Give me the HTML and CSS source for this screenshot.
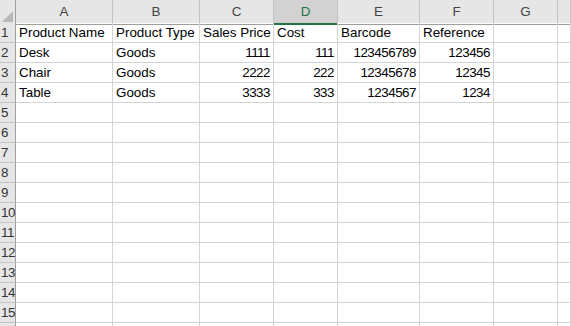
FILE: index.html
```html
<!DOCTYPE html>
<html lang="en">
<head>
  <meta charset="UTF-8" />
  <title>Products</title>
  <link rel="stylesheet" href="styles.css">
</head>
<body>
  <div class="sheet">
    <div class="row head">
      <div class="corner"></div>
      <div class="col">A</div>
      <div class="col">B</div>
      <div class="col">C</div>
      <div class="col active">D</div>
      <div class="col">E</div>
      <div class="col">F</div>
      <div class="col">G</div>
      <div class="col"></div>
    </div>

    <div class="row">
      <div class="num">1</div>
      <div class="cell">Product Name</div>
      <div class="cell">Product Type</div>
      <div class="cell">Sales Price</div>
      <div class="cell">Cost</div>
      <div class="cell">Barcode</div>
      <div class="cell">Reference</div>
      <div class="cell"></div>
      <div class="cell"></div>
    </div>
    <div class="row">
      <div class="num">2</div>
      <div class="cell">Desk</div>
      <div class="cell">Goods</div>
      <div class="cell val">1111</div>
      <div class="cell val">111</div>
      <div class="cell val">123456789</div>
      <div class="cell val">123456</div>
      <div class="cell"></div>
      <div class="cell"></div>
    </div>
    <div class="row">
      <div class="num">3</div>
      <div class="cell">Chair</div>
      <div class="cell">Goods</div>
      <div class="cell val">2222</div>
      <div class="cell val">222</div>
      <div class="cell val">12345678</div>
      <div class="cell val">12345</div>
      <div class="cell"></div>
      <div class="cell"></div>
    </div>
    <div class="row">
      <div class="num">4</div>
      <div class="cell">Table</div>
      <div class="cell">Goods</div>
      <div class="cell val">3333</div>
      <div class="cell val">333</div>
      <div class="cell val">1234567</div>
      <div class="cell val">1234</div>
      <div class="cell"></div>
      <div class="cell"></div>
    </div>

    <div class="row"><div class="num">5</div><div class="cell"></div><div class="cell"></div><div class="cell"></div><div class="cell"></div><div class="cell"></div><div class="cell"></div><div class="cell"></div><div class="cell"></div></div>
    <div class="row"><div class="num">6</div><div class="cell"></div><div class="cell"></div><div class="cell"></div><div class="cell"></div><div class="cell"></div><div class="cell"></div><div class="cell"></div><div class="cell"></div></div>
    <div class="row"><div class="num">7</div><div class="cell"></div><div class="cell"></div><div class="cell"></div><div class="cell"></div><div class="cell"></div><div class="cell"></div><div class="cell"></div><div class="cell"></div></div>
    <div class="row"><div class="num">8</div><div class="cell"></div><div class="cell"></div><div class="cell"></div><div class="cell"></div><div class="cell"></div><div class="cell"></div><div class="cell"></div><div class="cell"></div></div>
    <div class="row"><div class="num">9</div><div class="cell"></div><div class="cell"></div><div class="cell"></div><div class="cell"></div><div class="cell"></div><div class="cell"></div><div class="cell"></div><div class="cell"></div></div>
    <div class="row"><div class="num">10</div><div class="cell"></div><div class="cell"></div><div class="cell"></div><div class="cell"></div><div class="cell"></div><div class="cell"></div><div class="cell"></div><div class="cell"></div></div>
    <div class="row"><div class="num">11</div><div class="cell"></div><div class="cell"></div><div class="cell"></div><div class="cell"></div><div class="cell"></div><div class="cell"></div><div class="cell"></div><div class="cell"></div></div>
    <div class="row"><div class="num">12</div><div class="cell"></div><div class="cell"></div><div class="cell"></div><div class="cell"></div><div class="cell"></div><div class="cell"></div><div class="cell"></div><div class="cell"></div></div>
    <div class="row"><div class="num">13</div><div class="cell"></div><div class="cell"></div><div class="cell"></div><div class="cell"></div><div class="cell"></div><div class="cell"></div><div class="cell"></div><div class="cell"></div></div>
    <div class="row"><div class="num">14</div><div class="cell"></div><div class="cell"></div><div class="cell"></div><div class="cell"></div><div class="cell"></div><div class="cell"></div><div class="cell"></div><div class="cell"></div></div>
    <div class="row"><div class="num">15</div><div class="cell"></div><div class="cell"></div><div class="cell"></div><div class="cell"></div><div class="cell"></div><div class="cell"></div><div class="cell"></div><div class="cell"></div></div>
    <div class="row"><div class="num"></div><div class="cell"></div><div class="cell"></div><div class="cell"></div><div class="cell"></div><div class="cell"></div><div class="cell"></div><div class="cell"></div><div class="cell"></div></div>
  </div>
</body>
</html>
```

FILE: styles.css
```css
* {
  box-sizing: border-box;
  font-family: "Liberation Sans", Arial, sans-serif;
}
html, body {
  margin: 0;
  padding: 0;
  overflow: hidden;
  background: #fff;
  height: 100%;
  width: 100%;
}
.sheet {
  display: flex;
  flex-direction: column;
  font-size: 13.4px;
  color: #000;
}
.row {
  display: grid;
  grid-template-columns: 16px 97px 87px 74px 64px 82px 74px 64px 1fr;
  height: 20px;
  line-height: 19px;
}
.head {
  height: 23px;
  background: #e6e6e6;
  color: #444;
  line-height: 22px;
}
.corner {
  display: flex;
  align-items: flex-end;
  justify-content: flex-end;
  padding: 0 2px 2px 0;
  border-right: 1px solid #9e9e9e;
  border-bottom: 1px solid #9e9e9e;
}
.corner::after {
  content: '';
  width: 0;
  height: 0;
  border-left: 11px solid transparent;
  border-bottom: 11px solid #b8b8b8;
}
.col {
  text-align: center;
  padding-top: 1px;
  border-right: 1px solid #c4c4c4;
  border-bottom: 1px solid #9e9e9e;
}
.col.active {
  background: #d2d2d2;
  color: #217346;
  border-bottom: 2px solid #217346;
}
.num {
  background: #e6e6e6;
  color: #333;
  padding-left: 1px;
  letter-spacing: -0.5px;
  border-right: 1px solid #9e9e9e;
  border-bottom: 1px solid #c4c4c4;
  overflow: hidden;
  white-space: nowrap;
}
.cell {
  padding: 0 3px;
  border-right: 1px solid #d4d4d4;
  border-bottom: 1px solid #d4d4d4;
  white-space: nowrap;
  overflow: hidden;
}
.val {
  text-align: right;
  letter-spacing: -0.5px;
}
```
